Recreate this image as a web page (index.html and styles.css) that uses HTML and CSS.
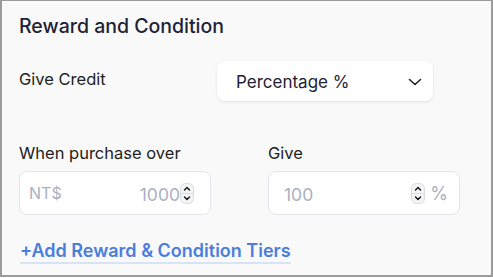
FILE: index.html
```html
<!DOCTYPE html>
<html lang="en">
<head>
    <meta charset="UTF-8" />
    <meta name="viewport" content="width=device-width, initial-scale=1.0" />
    <title>Reward and Condition</title>
    <link rel="stylesheet" href="styles.css">
</head>
<body>
    <div class="panel">
        <h2 class="panel-title">Reward and Condition</h2>

        <div class="credit-row">
            <span class="label">Give Credit</span>
            <div class="select-box">
                <span>Percentage %</span>
                <svg class="chevron" width="14" height="8" viewBox="0 0 14 8">
                    <path d="M1.5 1.5 L7 6.5 L12.5 1.5" fill="none" stroke="#222" stroke-width="1.6" stroke-linecap="round" stroke-linejoin="round"/>
                </svg>
            </div>
        </div>

        <div class="tier-row">
            <div class="field">
                <label class="label">When purchase over</label>
                <div class="num-input">
                    <span class="prefix">NT$</span>
                    <input type="text" class="value right" value="1000" readonly />
                    <span class="spinner">
                        <svg width="14" height="21" viewBox="0 0 14 21">
                            <rect x="0.5" y="0.5" width="13" height="20" rx="5" fill="#f4f4f6" stroke="#d9dbe0"/>
                            <line x1="1" y1="10.5" x2="13" y2="10.5" stroke="#dcdde2"/>
                            <path d="M4.5 7 L7 4.5 L9.5 7" fill="none" stroke="#111" stroke-width="1.4" stroke-linecap="round" stroke-linejoin="round"/>
                            <path d="M4.5 14 L7 16.5 L9.5 14" fill="none" stroke="#111" stroke-width="1.4" stroke-linecap="round" stroke-linejoin="round"/>
                        </svg>
                    </span>
                </div>
            </div>
            <div class="field">
                <label class="label">Give</label>
                <div class="num-input pct">
                    <input type="text" class="value" value="100" readonly />
                    <span class="spinner">
                        <svg width="14" height="21" viewBox="0 0 14 21">
                            <rect x="0.5" y="0.5" width="13" height="20" rx="5" fill="#f4f4f6" stroke="#d9dbe0"/>
                            <line x1="1" y1="10.5" x2="13" y2="10.5" stroke="#dcdde2"/>
                            <path d="M4.5 7 L7 4.5 L9.5 7" fill="none" stroke="#111" stroke-width="1.4" stroke-linecap="round" stroke-linejoin="round"/>
                            <path d="M4.5 14 L7 16.5 L9.5 14" fill="none" stroke="#111" stroke-width="1.4" stroke-linecap="round" stroke-linejoin="round"/>
                        </svg>
                    </span>
                    <span class="suffix">%</span>
                </div>
            </div>
        </div>

        <a href="#" class="add-tier">+Add Reward &amp; Condition Tiers</a>
    </div>
</body>
</html>
```

FILE: styles.css
```css
/* Global Styles */
body {
    margin: 0;
    font-family: Inter, 'Noto Sans', sans-serif;
    background: #fff;
}

.panel {
    box-sizing: border-box;
    width: 493px;
    height: 277px;
    border: 2px solid #9b9b9b;
    border-top-width: 1px;
    background-color: #f9f9f9;
    padding: 11px 17px 0 17px;
}

.panel-title {
    margin: 0;
    font-size: 19.5px;
    font-weight: 500;
    color: #1e2235;
    line-height: 28px;
}

.label {
    font-size: 16.5px;
    color: #222;
    line-height: 20px;
}

.credit-row {
    display: flex;
    align-items: center;
    margin-top: 21px;
}

.credit-row .label {
    width: 198px;
    margin-top: -4px;
}

.select-box {
    box-sizing: border-box;
    width: 216px;
    height: 40px;
    background-color: #fff;
    border-radius: 8px;
    box-shadow: 0 1px 3px rgba(0, 0, 0, 0.1);
    display: flex;
    align-items: center;
    justify-content: space-between;
    padding: 2px 11px 0 19px;
    font-size: 17px;
    color: #1e2235;
}

.tier-row {
    display: flex;
    gap: 57px;
    margin-top: 42px;
}

.field {
    display: flex;
    flex-direction: column;
    gap: 8px;
}

.num-input {
    box-sizing: border-box;
    width: 192px;
    height: 44px;
    background-color: #fff;
    border: 1px solid #e2e5ea;
    border-radius: 8px;
    display: flex;
    align-items: center;
    padding: 0 16px 0 9px;
    font-size: 17px;
    color: #aab0bf;
}

.num-input.pct {
    padding-right: 11px;
}

.prefix {
    font-size: 16px;
}

.value {
    flex: 1;
    min-width: 0;
    border: none;
    outline: none;
    background: none;
    padding: 2px 0 0 6px;
    font-family: inherit;
    font-size: 17.5px;
    color: #aab0bf;
}

.value.right {
    text-align: right;
    padding: 2px 0 0 0;
}

.spinner {
    display: flex;
    margin-top: 1px;
}

.suffix {
    margin-left: 5px;
    font-size: 18px;
}

.add-tier {
    display: inline-block;
    margin-top: 25px;
    margin-left: 1px;
    padding-bottom: 1px;
    border-bottom: 2px solid #d8e3f7;
    font-size: 18px;
    font-weight: 600;
    color: #4a7ddc;
    text-decoration: none;
    line-height: 21px;
}
```
